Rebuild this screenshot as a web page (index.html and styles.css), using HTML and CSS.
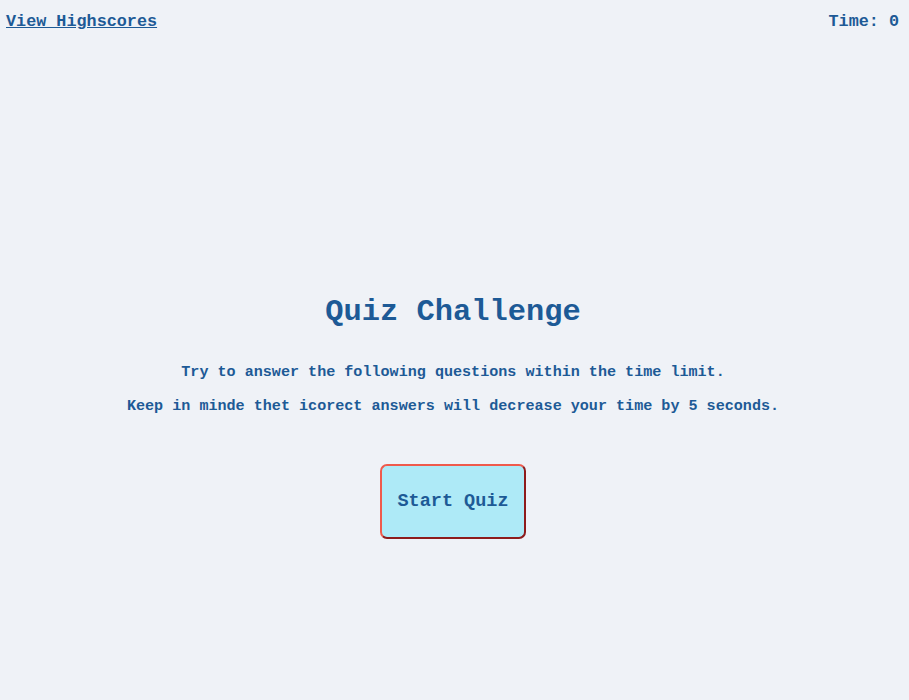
FILE: index.html
```html
<!DOCTYPE html>
<html>
<head>
<meta charset="utf-8">
<link rel="stylesheet" href="styles.css">
</head>
<body>
<header class="top">
  <a class="highscores" href="#">View Highscores</a>
  <div class="timer">Time: <span>0</span></div>
</header>
<main class="intro">
  <h1 class="title">Quiz Challenge</h1>
  <p class="desc">Try to answer the following questions within the time limit.</p>
  <p class="desc">Keep in minde thet icorect answers will decrease your time by 5 seconds.</p>
  <button class="start">Start Quiz</button>
</main>
</body>
</html>
```
FILE: styles.css
```css
html, body {
  margin: 0;
  padding: 0;
}
body {
  background: #eff2f7;
  color: #1d5a96;
  font-family: "Liberation Mono", "Courier New", monospace;
  font-weight: bold;
  height: 700px;
}
.top {
  display: flex;
  justify-content: space-between;
  align-items: center;
  padding: 11px 10px 0 6px;
  font-size: 16.8px;
  line-height: 22px;
}
.highscores {
  color: #1d5a96;
  text-decoration: underline;
}
.intro {
  display: flex;
  flex-direction: column;
  align-items: center;
  padding-top: 259px;
  padding-right: 3px;
}
.title {
  margin: 0;
  font-size: 30.4px;
  line-height: 40px;
}
.desc {
  margin: 0;
  font-size: 15.1px;
  line-height: 34px;
}
.title + .desc {
  margin-top: 23px;
}
.start {
  margin-top: 41px;
  width: 146px;
  height: 75px;
  background: #aeeaf7;
  color: #1d5a96;
  font-family: inherit;
  font-weight: bold;
  font-size: 18.5px;
  border: 2px solid;
  border-color: #ef5a4c #8d1c1c #8d1c1c #ef5a4c;
  border-radius: 7px;
}
```
